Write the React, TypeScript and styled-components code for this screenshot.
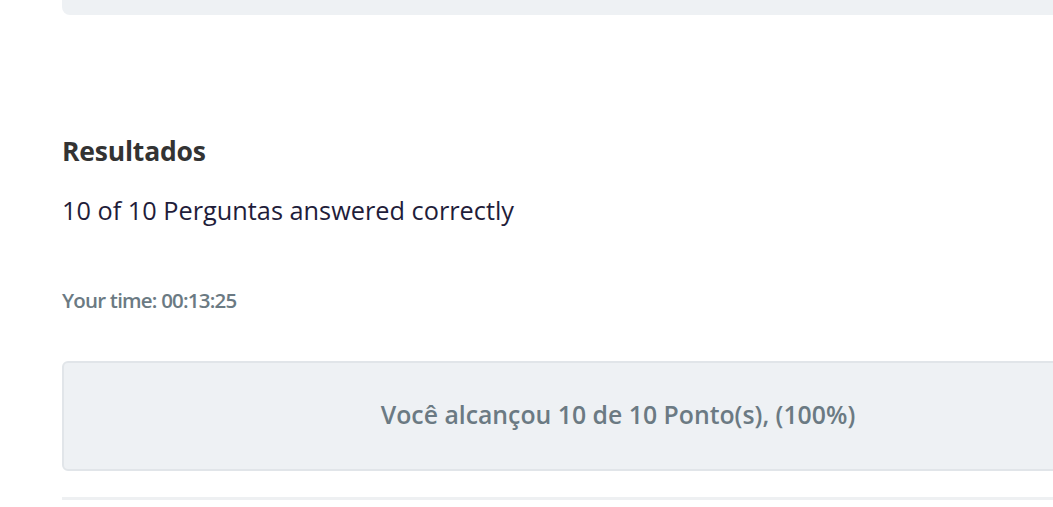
import React from "react";
import styled, { createGlobalStyle } from "styled-components";

const Global = createGlobalStyle`
  html, body { margin: 0; padding: 0; background: #fff; overflow: hidden; }
  body { font-family: "Open Sans", "Noto Sans", sans-serif; }
`;

const Page = styled.div`
  width: 1180px;
  padding-left: 62px;
  box-sizing: border-box;
  display: flex;
  flex-direction: column;
`;

const TopPanel = styled.div`
  height: 15px;
  background: #eef1f4;
  border-radius: 0 0 8px 8px;
`;

const Heading = styled.h2`
  margin: 120px 0 0;
  font-size: 26.5px;
  line-height: 32px;
  font-weight: 700;
  color: #333333;
  letter-spacing: -0.2px;
`;

const Summary = styled.p`
  margin: 27px 0 0;
  font-size: 25.3px;
  line-height: 32px;
  color: #1f1d3a;
`;

const TimeLine = styled.p`
  margin: 62px 0 0;
  font-size: 20.5px;
  line-height: 24px;
  font-weight: 600;
  letter-spacing: -0.8px;
  color: #6b7a83;
`;

const ScoreBox = styled.div`
  margin-top: 49px;
  width: 1112px;
  height: 110px;
  box-sizing: border-box;
  padding-bottom: 4px;
  background: #eef1f4;
  border: 2px solid #e1e5e9;
  border-radius: 6px;
  display: flex;
  align-items: center;
  justify-content: center;
  font-size: 24.8px;
  font-weight: 600;
  color: #6b7a83;
`;

const Divider = styled.div`
  margin-top: 26px;
  height: 3px;
  background: #eef0f2;
`;

export default function App() {
  return (
    <>
      <Global />
      <Page>
        <TopPanel />
        <Heading>Resultados</Heading>
        <Summary>10 of 10 Perguntas answered correctly</Summary>
        <TimeLine>Your time: 00:13:25</TimeLine>
        <ScoreBox>Você alcançou 10 de 10 Ponto(s), (100%)</ScoreBox>
        <Divider />
      </Page>
    </>
  );
}
